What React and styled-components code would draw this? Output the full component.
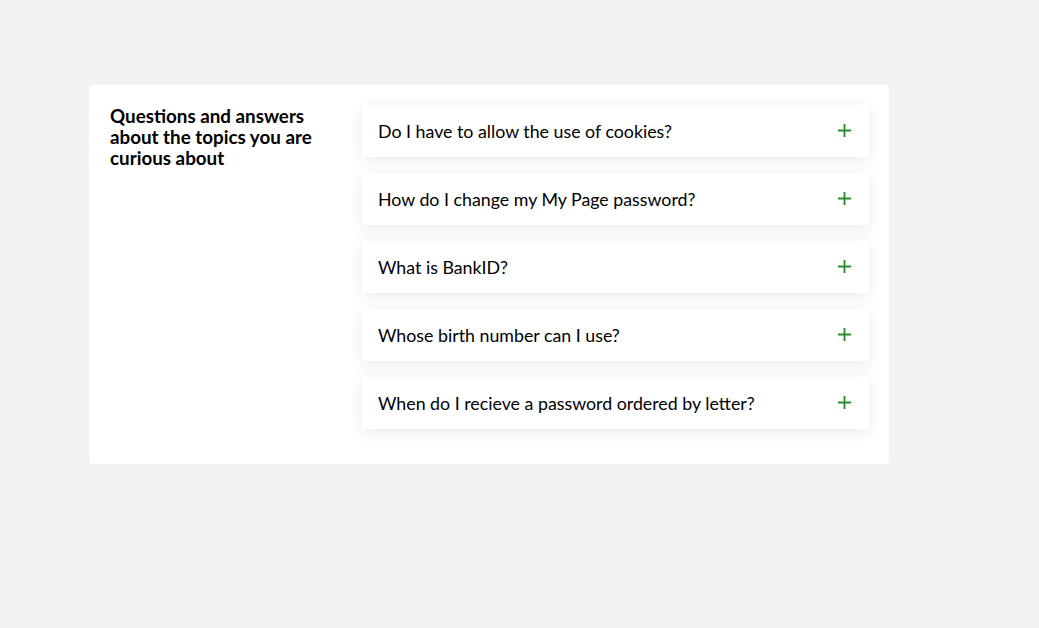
import React from 'react';
import styled, { createGlobalStyle } from 'styled-components';

const questions = [
  'Do I have to allow the use of cookies?',
  'How do I change my My Page password?',
  'What is BankID?',
  'Whose birth number can I use?',
  'When do I recieve a password ordered by letter?',
];

const GlobalStyle = createGlobalStyle`
  html, body {
    margin: 0;
    padding: 0;
    background: #f2f2f2;
    font-family: Lato, "Open Sans", sans-serif;
    color: #000;
  }
`;

export default function App() {
  return (
    <Page>
      <GlobalStyle />
      <Card>
        <Heading>Questions and answers about the topics you are curious about</Heading>
        <List>
          {questions.map(q => (
            <Item key={q}>
              <Question>{q}</Question>
              <PlusIcon viewBox="0 0 16 16" aria-hidden="true">
                <path d="M8 1v14M1 8h14" />
              </PlusIcon>
            </Item>
          ))}
        </List>
      </Card>
    </Page>
  );
}

const Page = styled.div`
  padding: 85px 0 0 89px;
  min-height: 628px;
  box-sizing: border-box;
`;

const Card = styled.div`
  width: 800px;
  box-sizing: border-box;
  background: #fff;
  border-radius: 4px;
  padding: 20px 20px 35px 21px;
  display: grid;
  grid-template-columns: 252px 1fr;
  align-items: start;
`;

const Heading = styled.h2`
  margin: 0;
  max-width: 232px;
  font-size: 18.8px;
  line-height: 21px;
  font-weight: 700;
`;

const List = styled.div`
  display: flex;
  flex-direction: column;
  gap: 16px;
`;

const Item = styled.div`
  height: 52px;
  background: #fff;
  box-shadow: 0 3px 14px rgba(0, 0, 0, 0.09);
  display: flex;
  align-items: center;
  justify-content: space-between;
  padding: 0 17px 0 16px;
  cursor: pointer;
`;

const Question = styled.span`
  font-size: 17.8px;
  line-height: 20px;
`;

const PlusIcon = styled.svg`
  width: 15px;
  height: 15px;
  fill: none;
  stroke: #2e8b2e;
  stroke-width: 2;
  margin-top: -2px;
`;
